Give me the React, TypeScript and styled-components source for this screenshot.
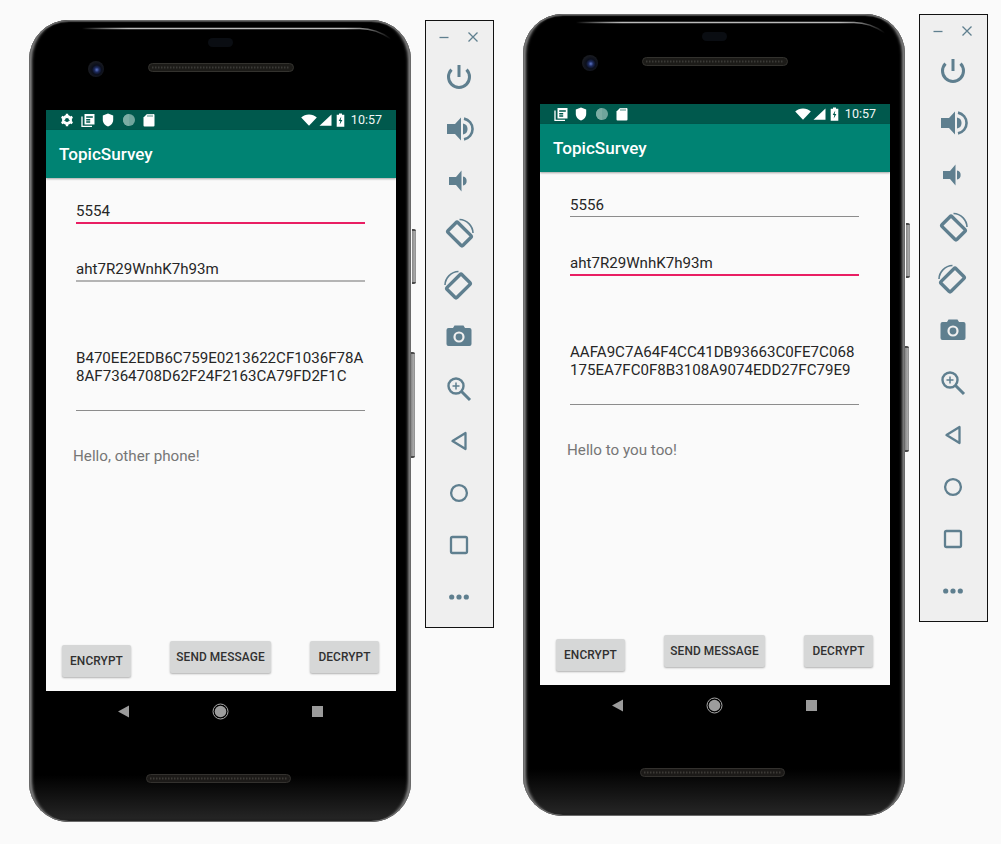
import React from "react";
import styled, { createGlobalStyle } from "styled-components";

const Global = createGlobalStyle`
  html, body { margin: 0; padding: 0; background: #fafafa; }
  body { font-family: Roboto, "Liberation Sans", sans-serif; }
`;

const Page = styled.div`
  width: 1001px;
  height: 844px;
  overflow: hidden;
  display: grid;
  grid-template-columns: 494px 1fr;
  background: #fafafa;
`;

const Emulator = styled.section<{ $left: number; $top: number }>`
  display: flex;
  align-items: flex-start;
  gap: 14px;
  padding: ${(p) => p.$top}px 0 0 ${(p) => p.$left}px;
`;

const PhoneBody = styled.div`
  position: relative;
  width: 382px;
  height: 802px;
  box-sizing: border-box;
  padding: 0 15px 0 17px;
  border-radius: 40px;
  background: linear-gradient(180deg, #000 0, #000 755px, #242424 798px, #1c1c1c 802px);
  box-shadow:
    inset 0 0 0 1px #6a6a6a,
    inset 6px 0 3px -3px #8a8a8a,
    inset -6px 0 3px -3px #8a8a8a,
    inset 0 3px 1px -1px #4c4c4c,
    inset 0 -2px 1px -1px #555;
  flex: none;
`;

const SideKey = styled.div<{ $top: number; $height: number; $left: number }>`
  position: absolute;
  left: calc(100% + ${(p) => p.$left}px);
  top: ${(p) => p.$top}px;
  width: 4px;
  height: ${(p) => p.$height}px;
  box-sizing: border-box;
  border-radius: 0 2px 2px 0;
  border-top: 2px solid #4a4a4a;
  border-bottom: 2px solid #4a4a4a;
  background: linear-gradient(90deg, #858585, #a8a8a8 60%, #8c8c8c);
`;

const Bezel = styled.svg`
  display: block;
  width: 350px;
`;

const Screen = styled.div`
  width: 350px;
  height: 581px;
  display: flex;
  flex-direction: column;
  background: #fafafa;
`;

const StatusBar = styled.div`
  height: 20px;
  flex: none;
  display: flex;
  align-items: center;
  padding: 0 14px;
  background: #00594d;
  color: #fff;
`;

const StatusIcons = styled.div`
  display: flex;
  align-items: center;
  gap: 7px;
`;

const StatusRight = styled.div`
  margin-left: auto;
  display: flex;
  align-items: center;
  gap: 2px;
`;

const BatterySlot = styled.span`
  display: flex;
  margin-left: 2px;
`;

const Clock = styled.span`
  margin-left: 4px;
  font-size: 12.5px;
  line-height: 20px;
  color: #f2f7f6;
`;

const AppBar = styled.header`
  height: 48px;
  flex: none;
  box-sizing: border-box;
  padding: 0 13px;
  display: flex;
  align-items: center;
  background: #008373;
  color: #fff;
  font-size: 17.1px;
  font-weight: 500;
  box-shadow: 0 1px 2px rgba(0, 0, 0, 0.35);
`;

const Form = styled.main`
  flex: 1;
  display: flex;
  flex-direction: column;
  padding: 0 31px 0 30px;
  color: #262626;
  font-size: 15.1px;
`;

const FirstField = styled.div<{ $active: boolean }>`
  box-sizing: border-box;
  height: 21px;
  margin-top: 24px;
  padding-top: 1px;
  line-height: 17px;
  border-bottom: 1px solid ${(p) => (p.$active ? "#e91e63" : "#8c8c8c")};
  box-shadow: ${(p) => (p.$active ? "0 1px 0 #e91e63" : "none")};
`;

const SecondField = styled.div<{ $active: boolean }>`
  box-sizing: border-box;
  height: 23px;
  margin-top: 36px;
  padding-top: 2px;
  line-height: 17px;
  border-bottom: 2px solid ${(p) => (p.$active ? "#e91e63" : "#b4b4b4")};
`;

const CipherField = styled.div`
  box-sizing: border-box;
  height: 71px;
  margin-top: 58px;
  padding-top: 9px;
  white-space: pre;
  line-height: 18px;
  border-bottom: 1px solid #8c8c8c;
`;

const Message = styled.p`
  margin: 36px 0 0 -3px;
  font-size: 15.2px;
  line-height: 18px;
  color: #767676;
`;

const ButtonRow = styled.div`
  margin-top: auto;
  padding: 0 17px 14px 16px;
  display: flex;
  justify-content: space-between;
  align-items: flex-start;
`;

const ActionButton = styled.button<{ $low?: boolean; $width: number }>`
  width: ${(p) => p.$width}px;
  height: 32px;
  margin-top: ${(p) => (p.$low ? 4 : 0)}px;
  padding: 0;
  border: 0;
  border-radius: 2px;
  background: #d6d7d7;
  color: #303030;
  font: 500 11.9px Roboto, sans-serif;
  letter-spacing: 0.1px;
  box-shadow: 0 1px 2px rgba(0, 0, 0, 0.3);
`;

const ToolWindow = styled.aside`
  box-sizing: border-box;
  width: 69px;
  height: 608px;
  flex: none;
  border: 1px solid #111;
  background: #efefef;
  color: #5f7f8f;
`;

const WindowControls = styled.div`
  height: 30px;
  box-sizing: border-box;
  display: flex;
  align-items: flex-start;
  padding: 10px 14px 0 12px;
  justify-content: space-between;
`;

const ToolList = styled.div`
  display: flex;
  flex-direction: column;
  align-items: center;
  padding-right: 1px;
`;

const ToolButton = styled.div`
  height: 52px;
  display: flex;
  align-items: center;
  justify-content: center;
`;

const I = ({ children, s = 30 }: { children: React.ReactNode; s?: number }) => (
  <svg width={s} height={s} viewBox={`0 0 ${s} ${s}`} fill="currentColor" aria-hidden>
    {children}
  </svg>
);

const S = ({ w, h, children }: { w: number; h: number; children: React.ReactNode }) => (
  <svg width={w} height={h} viewBox={`0 0 ${w} ${h}`} fill="#fff" aria-hidden>
    {children}
  </svg>
);

const line = { fill: "none", stroke: "currentColor", strokeWidth: 3 } as const;

const tools: React.ReactNode[] = [
  <I key="p">
    <path d="M7.500 7.600A10.500 10.500 0 1 0 22.500 7.600" {...line} />
    <path d="M15 3v12" {...line} />
  </I>,
  <I key="vu">
    <path d="M3 10h8l6-6.500v23L11 20H3z" />
    <path d="M19 9.500a5.600 5.600 0 0 1 0 11z" />
    <path d="M20 4.600a10.600 10.600 0 0 1 0 20.800" {...line} strokeWidth={2.600} />
  </I>,
  <I key="vd">
    <path d="M5 11h7l5.500-6.500v21L12 19H5z" />
    <path d="M19 10.500a4.600 4.600 0 0 1 0 9z" />
  </I>,
  <I key="rr">
    <rect x="5" y="9" width="21" height="14" rx="1.500" {...line} strokeWidth={3.400} transform="rotate(45 15.500 16)" />
    <path d="M15.500 1.500A14 14 0 0 1 29 15" {...line} strokeWidth={1.600} />
  </I>,
  <I key="rl">
    <rect x="4" y="9" width="21" height="14" rx="1.500" {...line} strokeWidth={3.400} transform="rotate(-45 14.500 16)" />
    <path d="M14.500 1.500A14 14 0 0 0 1 15" {...line} strokeWidth={1.600} />
  </I>,
  <I key="c">
    <path d="M10.500 3.500 9 6H4.500A2 2 0 0 0 2.500 8v14a2 2 0 0 0 2 2h21a2 2 0 0 0 2-2V8a2 2 0 0 0-2-2H21l-1.500-2.500z" />
    <circle cx="15" cy="15" r="4.500" fill="none" stroke="#efefef" strokeWidth="2.200" />
  </I>,
  <I key="z">
    <circle cx="12" cy="12" r="7.500" {...line} strokeWidth={2.400} />
    <path d="M17.500 17.500 26 26" {...line} />
    <path d="M12 8.500v7M8.500 12h7" {...line} strokeWidth={1.500} />
  </I>,
  <I key="b">
    <path d="M21.500 7v16L8.500 15z" {...line} strokeWidth={2.300} strokeLinejoin="round" />
  </I>,
  <I key="o">
    <circle cx="15" cy="15" r="7.900" {...line} strokeWidth={2.300} />
  </I>,
  <I key="s">
    <rect x="7" y="7" width="16" height="16" rx="1.500" {...line} strokeWidth={2.300} />
  </I>,
  <I key="m">
    <circle cx="7.700" cy="15" r="2.600" />
    <circle cx="15" cy="15" r="2.600" />
    <circle cx="22.300" cy="15" r="2.600" />
  </I>,
];

const Gear = () => (
  <S w={14} h={14}>
    <circle cx="7" cy="7" r="3.800" fill="none" stroke="#fff" strokeWidth="2.400" />
    <path d="M7 7V.800M7 7v6.200M7 7 1.600 3.900M7 7l5.400 3.100M7 7l-5.400 3.100M7 7l5.400-3.100" stroke="#fff" strokeWidth="2.400" />
    <circle cx="7" cy="7" r="2" fill="#00594d" />
  </S>
);
const News = () => (
  <S w={14} h={14}>
    <path d="M3.500 1h10v10.500h-10z" />
    <path d="M1 3.500v10h10" fill="none" stroke="#fff" strokeWidth="1.300" />
    <path d="M5.200 3.200h6.600v1.600H5.200zM5.200 6h4v1.400h-4zM5.200 8.300h4v1.400h-4z" fill="#00594d" />
  </S>
);
const Shield = () => (
  <S w={13} h={14}>
    <path d="M6 .500 11.200 2.500v4.300c0 3.200-2.200 5.800-5.200 6.700C3 12.600.800 10 .800 6.800V2.500z" />
  </S>
);
const Dot = () => (
  <S w={14} h={14}>
    <circle cx="7" cy="7" r="6" fill="#6fa59c" />
    <path d="M7 1a6 6 0 0 0 0 12z" fill="#7cada4" />
  </S>
);
const Card = () => (
  <S w={12} h={14}>
    <path d="M4 1h6.500a1 1 0 0 1 1 1v10.500a1 1 0 0 1-1 1h-9a1 1 0 0 1-1-1V4.500z" />
    <path d="M5 1.500v2.500M7 1.500v2.500M9 1.500v2.500" stroke="#00594d" strokeWidth=".7" />
  </S>
);
const Wifi = () => (
  <S w={16} h={12}>
    <path d="M8 11.700 .200 3.400C2.300 1.500 5 .500 8 .500s5.700 1 7.800 2.900z" />
  </S>
);
const Signal = () => (
  <S w={13} h={12}>
    <path d="M.500 11.800 12.500.500v11.300z" />
  </S>
);
const Battery = () => (
  <S w={9} h={14}>
    <path d="M3 .500h3v1.300h2.300v12H.700v-12H3z" />
    <path d="M5.300 3.500 2.700 8h1.600l-.6 3.500L6.400 7H4.700z" fill="#00594d" />
  </S>
);

const TopHardware = ({ id }: { id: string }) => (
  <Bezel height={90} viewBox="0 0 350 90" aria-hidden>
    <defs>
      <linearGradient id={`hl${id}`} x1="0" x2="1">
        <stop offset="0" stopColor="#fff" stopOpacity="0" />
        <stop offset=".15" stopColor="#bbb" />
        <stop offset=".85" stopColor="#bbb" />
        <stop offset="1" stopColor="#fff" stopOpacity="0" />
      </linearGradient>
      <radialGradient id={`lens${id}`} cx=".55" cy=".55" r=".5">
        <stop offset="0" stopColor="#5c75c9" />
        <stop offset=".3" stopColor="#1d2a5c" />
        <stop offset=".6" stopColor="#0b0f1c" />
        <stop offset="1" stopColor="#181a20" />
      </radialGradient>
    </defs>
    <path d="M36 8.500H314Q330 8.500 345 19" fill="none" stroke={`url(#hl${id})`} strokeWidth="1.300" />
    <rect x="162" y="18" width="25" height="9" rx="4.500" fill="#0a0d12" />
    <circle cx="50" cy="49" r="8" fill={`url(#lens${id})`} />
    <rect x="102.500" y="43.500" width="145" height="8" rx="4" fill="#1c1b18" stroke="#33322e" />
    <path d="M106 47.500h138" stroke="#3a3a36" strokeWidth="2" strokeDasharray="1.500 1.500" />
  </Bezel>
);

const BottomHardware = () => (
  <Bezel height={131} viewBox="0 0 350 131" aria-hidden>
    <path d="M83 14.500 72 20.500 83 26.500z" fill="#9b9b9b" />
    <circle cx="174.500" cy="20.500" r="7.500" fill="none" stroke="#a8a8a8" />
    <circle cx="174.500" cy="20.500" r="5.800" fill="#9c9c9c" />
    <rect x="266" y="15" width="11" height="11" fill="#9b9b9b" />
    <rect x="100.500" y="83.500" width="144" height="8" rx="4" fill="#1c1a18" stroke="#33312e" />
    <path d="M104 87.500h137" stroke="#3c3a36" strokeWidth="2" strokeDasharray="1.500 1.500" />
  </Bezel>
);

type PhoneProps = {
  id: string;
  port: string;
  secret: string;
  cipher: string;
  message: string;
  first: boolean;
  gear: boolean;
};

const Phone = ({ id, port, secret, cipher, message, first, gear }: PhoneProps) => (
  <PhoneBody>
    <SideKey $left={1} $top={209} $height={55} />
    <SideKey $left={0} $top={332} $height={106} />
    <TopHardware id={id} />
    <Screen>
      <StatusBar>
        <StatusIcons>
          {gear && <Gear />}
          <News />
          <Shield />
          <Dot />
          <Card />
        </StatusIcons>
        <StatusRight>
          <Wifi />
          <Signal />
          <BatterySlot>
            <Battery />
          </BatterySlot>
          <Clock>10:57</Clock>
        </StatusRight>
      </StatusBar>
      <AppBar>TopicSurvey</AppBar>
      <Form>
        <FirstField $active={first}>{port}</FirstField>
        <SecondField $active={!first}>{secret}</SecondField>
        <CipherField>{cipher}</CipherField>
        <Message>{message}</Message>
      </Form>
      <ButtonRow>
        <ActionButton $low $width={69}>ENCRYPT</ActionButton>
        <ActionButton $width={101}>SEND MESSAGE</ActionButton>
        <ActionButton $width={69}>DECRYPT</ActionButton>
      </ButtonRow>
    </Screen>
    <BottomHardware />
  </PhoneBody>
);

const Tools = () => (
  <ToolWindow>
    <WindowControls>
      <svg width="12" height="12" viewBox="0 0 12 12" aria-hidden>
        <path d="M1.500 6.500h9" stroke="currentColor" strokeWidth="1.300" />
      </svg>
      <svg width="12" height="12" viewBox="0 0 12 12" aria-hidden>
        <path d="M1.500 1.500l9 9M10.500 1.500l-9 9" stroke="currentColor" strokeWidth="1.300" />
      </svg>
    </WindowControls>
    <ToolList>
      {tools.map((t, i) => (
        <ToolButton key={i}>{t}</ToolButton>
      ))}
    </ToolList>
  </ToolWindow>
);

export default function App() {
  return (
    <Page>
      <Global />
      <Emulator $left={29} $top={20}>
        <Phone
          id="a"
          port="5554"
          secret="aht7R29WnhK7h93m"
          cipher={"B470EE2EDB6C759E0213622CF1036F78A\n8AF7364708D62F24F2163CA79FD2F1C"}
          message="Hello, other phone!"
          first
          gear
        />
        <Tools />
      </Emulator>
      <Emulator $left={29} $top={14}>
        <Phone
          id="b"
          port="5556"
          secret="aht7R29WnhK7h93m"
          cipher={"AAFA9C7A64F4CC41DB93663C0FE7C068\n175EA7FC0F8B3108A9074EDD27FC79E9"}
          message="Hello to you too!"
          first={false}
          gear={false}
        />
        <Tools />
      </Emulator>
    </Page>
  );
}
